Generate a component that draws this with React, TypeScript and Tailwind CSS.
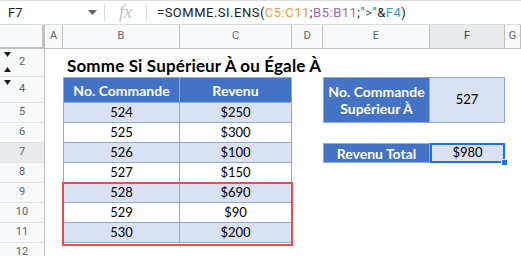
import React from "react";

const cols = ["A", "B", "C", "D", "E", "F", "G"];

const orders = [
  { no: "524", rev: "$250" },
  { no: "525", rev: "$300" },
  { no: "526", rev: "$100" },
  { no: "527", rev: "$150" },
  { no: "528", rev: "$690" },
  { no: "529", rev: "$90" },
  { no: "530", rev: "$200" },
];

// grid row index (1-based) for each visible sheet row
const rowLines = [
  { label: "2", row: "row-start-1" },
  { label: "4", row: "row-start-2" },
  { label: "5", row: "row-start-3" },
  { label: "6", row: "row-start-4" },
  { label: "7", row: "row-start-5", selected: true },
  { label: "8", row: "row-start-6" },
  { label: "9", row: "row-start-7" },
  { label: "10", row: "row-start-8" },
  { label: "11", row: "row-start-9" },
  { label: "12", row: "row-start-10" },
];

const dataRows = [
  "row-start-3",
  "row-start-4",
  "row-start-5",
  "row-start-6",
  "row-start-7",
  "row-start-8",
  "row-start-9",
];

const Caret = ({ up }: { up?: boolean }) => (
  <svg width="7" height="5" viewBox="0 0 7 5" className="block">
    <path d={up ? "M0 5 L3.5 0 L7 5 Z" : "M0 0 L7 0 L3.5 5 Z"} fill="#202124" />
  </svg>
);

const FormulaBar = () => (
  <div className="flex h-[25px] items-center border-t border-b border-[#dadce0] bg-white font-['Roboto',sans-serif] text-[13px] text-[#202124]">
    <div className="flex h-full w-[104px] items-center justify-between pl-2 pr-[7px]">
      <span>F7</span>
      <svg width="9" height="5" viewBox="0 0 9 5">
        <path d="M0 0 L9 0 L4.5 5 Z" fill="#5f6368" />
      </svg>
    </div>
    <div className="h-[17px] w-px bg-[#dadce0]" />
    <div className="flex h-full w-[41px] items-center justify-center font-['Liberation_Serif',serif] text-[18px] italic text-[#bdc1c6]">
      fx
    </div>
    <div className="h-[17px] w-px bg-[#dadce0]" />
    <div className="pl-[10px] tracking-[0.5px]">
      <span>=SOMME.SI.ENS(</span>
      <span className="text-[#f29a38]">C5:C11</span>
      <span>;</span>
      <span className="text-[#a55fb5]">B5:B11</span>
      <span>;</span>
      <span className="text-[#3c6b50]">"&gt;"</span>
      <span>&amp;</span>
      <span className="text-[#2aa0c8]">F4</span>
      <span>)</span>
    </div>
  </div>
);

const ColumnHeaders = () => (
  <div className="grid h-[24px] grid-cols-[45px_18px_117px_112px_31px_107px_75px_1fr] bg-[#f8f9fa] font-['Roboto',sans-serif] text-[11px] text-[#5f6368]">
    <div className="border-r-[3px] border-b-2 border-[#c0c0c0]" />
    {cols.map((c) => (
      <div
        key={c}
        className={`flex items-center justify-center border-r border-b border-[#c0c0c0] ${
          c === "F" ? "bg-[#e8eaed] text-[#3c4043]" : ""
        }`}
      >
        {c}
      </div>
    ))}
  </div>
);

const App = () => {
  return (
    <div className="h-[256px] w-[521px] overflow-hidden bg-white">
      <FormulaBar />
      <ColumnHeaders />
      <div className="relative grid grid-cols-[45px_18px_117px_112px_31px_107px_75px_1fr] grid-rows-[28px_26px_repeat(8,20px)] font-['Lato',sans-serif] text-[13px] text-black">
        {/* row headers */}
        {rowLines.map((r) => (
          <div
            key={r.label}
            className={`${r.row} col-start-1 relative flex items-center justify-center border-r border-b border-r-[#c0c0c0] border-b-[#e1e1e1] font-['Roboto',sans-serif] text-[11px] text-[#5f6368] ${
              r.selected ? "bg-[#e8eaed]" : "bg-[#f8f9fa]"
            }`}
          >
            {r.label === "2" && (
              <>
                <span className="absolute top-[3px] left-[4px]">
                  <Caret />
                </span>
                <span className="absolute bottom-[4px] left-[4px]">
                  <Caret up />
                </span>
              </>
            )}
            {r.label === "4" && (
              <span className="absolute top-[3px] left-[4px]">
                <Caret />
              </span>
            )}
            {r.label}
          </div>
        ))}

        {/* title */}
        <div className="row-start-1 col-start-3 col-span-4 flex items-end whitespace-nowrap pb-[3px] pl-1 text-[17px] font-bold leading-none tracking-[0.15px]">
          Somme Si Supérieur À ou Égale À
        </div>

        {/* table header */}
        <div className="row-start-2 col-start-3 flex items-center justify-center border border-[#8ea9db] bg-[#4472c4] text-[14px] font-bold text-white">
          No. Commande
        </div>
        <div className="row-start-2 col-start-4 flex items-center justify-center border-t border-r border-b border-[#8ea9db] bg-[#4472c4] text-[14px] font-bold text-white">
          Revenu
        </div>

        {/* table rows */}
        {orders.map((o, i) => {
          const bg = i % 2 === 0 ? "bg-[#d9e1f2]" : "bg-white";
          return (
            <React.Fragment key={o.no}>
              <div
                className={`${dataRows[i]} col-start-3 flex items-center justify-center border-r border-b border-l border-[#8ea9db] ${bg}`}
              >
                {o.no}
              </div>
              <div
                className={`${dataRows[i]} col-start-4 flex items-center justify-center border-r border-b border-[#8ea9db] ${bg}`}
              >
                {o.rev}
              </div>
            </React.Fragment>
          );
        })}

        {/* criteria */}
        <div className="row-start-2 row-span-2 col-start-6 flex flex-col items-center justify-center border border-[#8ea9db] bg-[#4472c4] text-[14px] font-bold leading-[17px] text-white">
          <span>No. Commande</span>
          <span>Supérieur À</span>
        </div>
        <div className="row-start-2 row-span-2 col-start-7 flex items-center justify-center border-t border-r border-b border-[#8ea9db] bg-[#d9e1f2]">
          527
        </div>

        {/* total */}
        <div className="row-start-5 col-start-6 flex items-center justify-center border border-[#8ea9db] bg-[#4472c4] text-[14px] font-bold text-white">
          Revenu Total
        </div>
        <div className="relative row-start-5 col-start-7 flex items-center justify-center border-2 border-[#1a73e8] bg-[#d9e1f2]">
          $980
          <span className="absolute right-[-5px] bottom-[-5px] h-[7px] w-[7px] border border-white bg-[#1a73e8]" />
        </div>

        {/* highlight around rows 9-11 */}
        <div className="pointer-events-none absolute top-[133px] left-[62px] h-[64px] w-[231px] border-2 border-[#f04a4a]" />
      </div>
    </div>
  );
};

export default App;
